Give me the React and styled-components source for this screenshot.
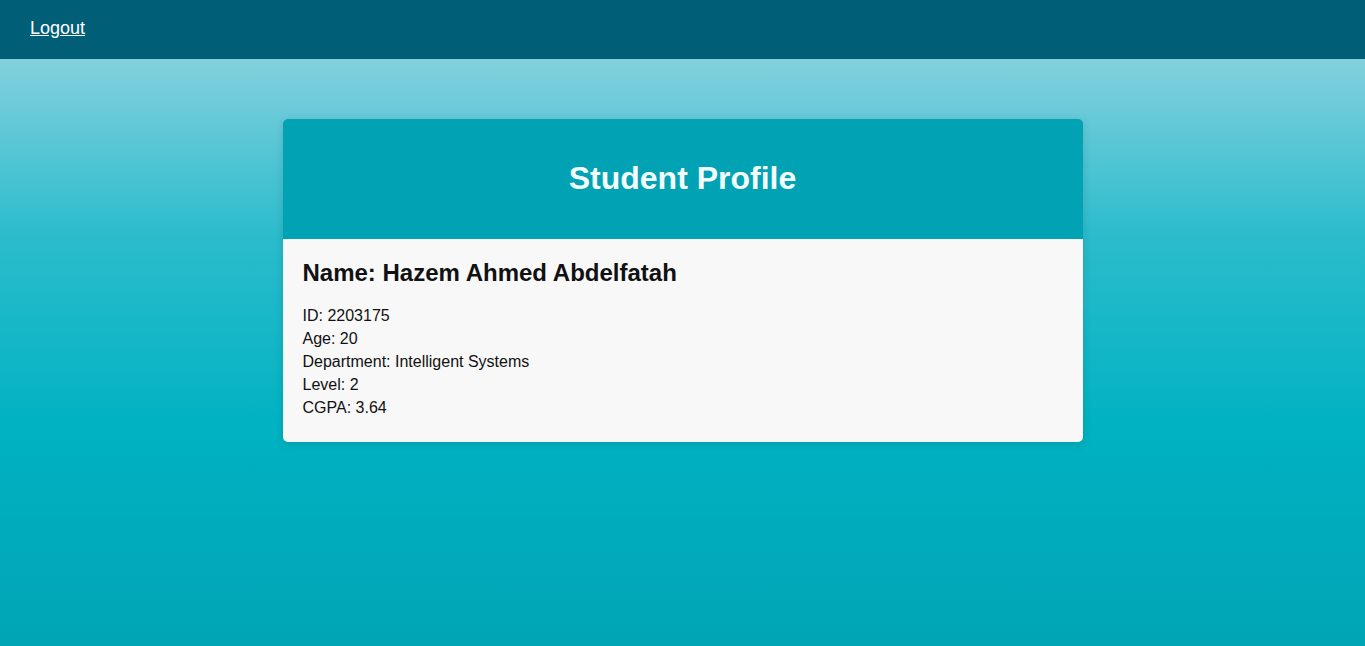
import React from 'react';
import styled, { createGlobalStyle } from 'styled-components';

const student = {
    name: 'Hazem Ahmed Abdelfatah',
    id: '2203175',
    age: 20,
    department: 'Intelligent Systems',
    level: 2,
    cgpa: 3.64,
};

function App() {
    const fields = [
        ['ID', student.id],
        ['Age', student.age],
        ['Department', student.department],
        ['Level', student.level],
        ['CGPA', student.cgpa],
    ];

    return (
        <Page>
            <GlobalStyle />
            <NavBar>
                <a href="#logout">Logout</a>
            </NavBar>
            <Main>
                <Card>
                    <CardHeader>
                        <h1>Student Profile</h1>
                    </CardHeader>
                    <CardBody>
                        <h2>Name: {student.name}</h2>
                        {fields.map(([label, value]) => (
                            <p key={label}>{label}: {value}</p>
                        ))}
                    </CardBody>
                </Card>
            </Main>
        </Page>
    );
}

export default App;

const GlobalStyle = createGlobalStyle`
    html, body {
        margin: 0;
        padding: 0;
    }

    body {
        font-family: "Liberation Sans", Arial, sans-serif;
    }
`;

const Page = styled.div`
    display: flex;
    flex-direction: column;
    min-height: 100vh;
`;

const NavBar = styled.nav`
    display: flex;
    align-items: center;
    height: 59px;
    padding: 0 30px 2px;
    box-sizing: border-box;
    background: #005e76;

    a {
        color: #ffffff;
        font-size: 18px;
        text-decoration: underline;
    }
`;

const Main = styled.main`
    flex: 1;
    display: flex;
    justify-content: center;
    align-items: flex-start;
    padding-top: 60px;
    background: linear-gradient(to bottom, #84d0de 0%, #2bbccc 30%, #00b2c2 63%, #00a5b5 100%);
`;

const Card = styled.section`
    width: 800px;
    border-radius: 5px;
    overflow: hidden;
    box-shadow: 0 2px 10px rgba(0, 0, 0, 0.12);
`;

const CardHeader = styled.header`
    display: flex;
    align-items: center;
    justify-content: center;
    height: 120px;
    padding-bottom: 2px;
    box-sizing: border-box;
    background: #00a2b4;

    h1 {
        margin: 0;
        color: #f4fdfd;
        font-size: 32px;
        font-weight: 700;
    }
`;

const CardBody = styled.div`
    padding: 20px;
    background: #f8f8f8;
    color: #111;

    h2 {
        margin: 0 0 20px;
        font-size: 24px;
        font-weight: 700;
    }

    p {
        margin: 5px 0;
        font-size: 16px;
    }
`;
